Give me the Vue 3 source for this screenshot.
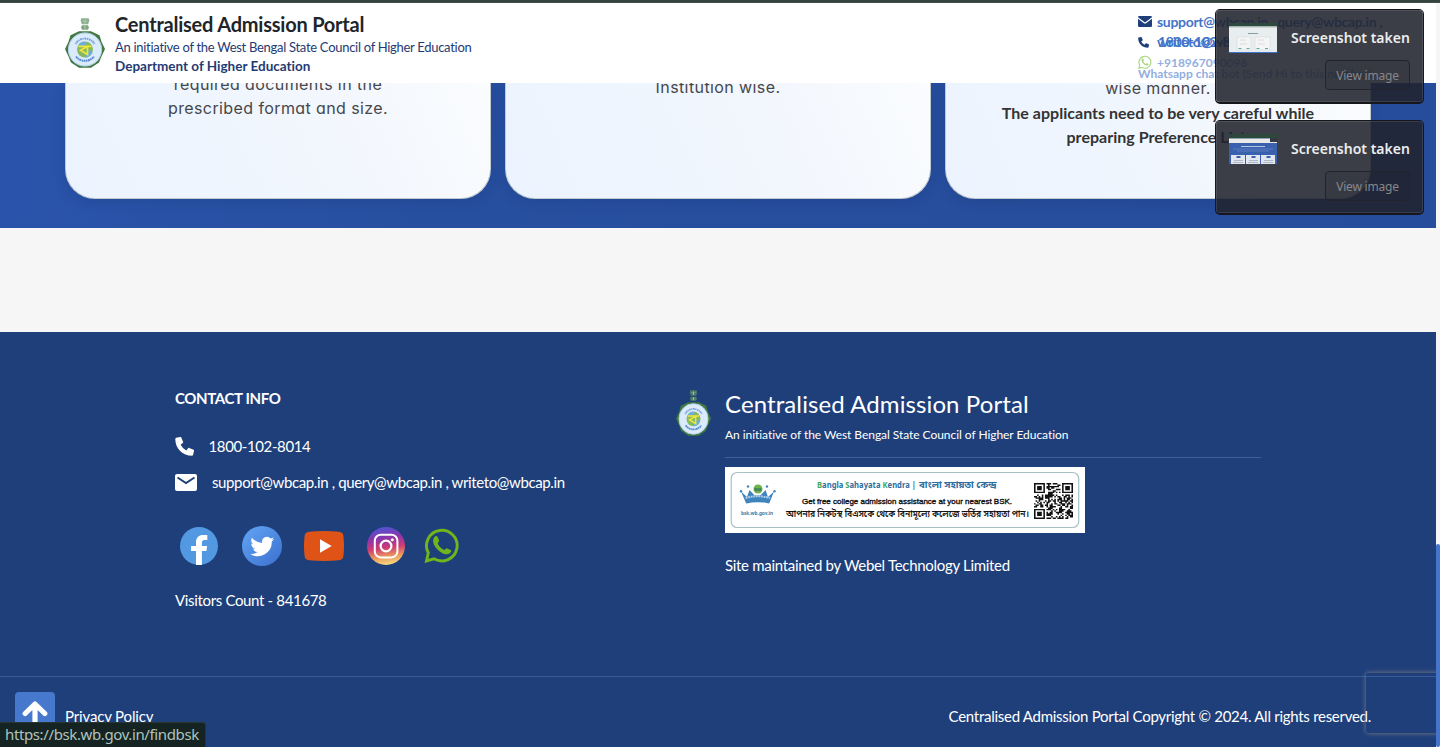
<script setup>
const size = 25
const inFinder = (x, y) => {
  const corners = [[0, 0], [size - 7, 0], [0, size - 7]]
  for (const [cx, cy] of corners) {
    const dx = x - cx
    const dy = y - cy
    if (dx >= -1 && dx <= 7 && dy >= -1 && dy <= 7) {
      if (dx < 0 || dy < 0 || dx > 6 || dy > 6) return 0
      const edge = dx === 0 || dy === 0 || dx === 6 || dy === 6
      const core = dx > 1 && dx < 5 && dy > 1 && dy < 5
      return edge || core ? 1 : 0
    }
  }
  return -1
}
let seed = 77
const rand = () => {
  seed = (seed * 1103515245 + 12345) % 2147483648
  return seed / 2147483648
}
let qrPath = ''
for (let y = 0; y < size; y++) {
  for (let x = 0; x < size; x++) {
    const f = inFinder(x, y)
    const r = rand()
    if (f === 1 || (f === -1 && r > 0.47)) qrPath += `M${x} ${y}h1v1h-1z`
  }
}

const notes = [{ id: 'light' }, { id: 'blue' }]
</script>

<template>
  <div class="screen">
    <svg class="defs" width="0" height="0">
      <defs>
        <symbol id="emblem" viewBox="0 0 40 50">
          <g fill="#5c8f62">
            <path d="M16.300.3h7.400l.6 2.300-1.200 3.600h-6.200l-1.200-3.600z" opacity=".7" />
            <path d="M17 7.300h6l1 2.200-1.200 2.300h-5.600L16 9.500z" opacity=".8" />
          </g>
          <path d="M20 1.500v4M17.800 3h1M21.200 3h1M20 8v3" stroke="#cfe0d0" stroke-width=".7" />
          <path d="M14 13.200h12l8.500 4 2 6.500L40 31l-3.500 7.500-2.500 6-8 5.300H14l-8-5.300-2.500-6L0 31l3.500-7.300 2-6.500z" fill="#41793f" />
          <circle cx="20" cy="31.500" r="16.600" fill="#dcebfc" stroke="#b4d2f2" stroke-width="1" />
          <path d="M10.500 26a11 11 0 0 1 19 0" fill="none" stroke="#5c8ed2" stroke-width="2" stroke-dasharray="1.300 .6 2 .5" opacity=".75" />
          <path d="M11 38.500a11.500 11.500 0 0 0 18 0" fill="none" stroke="#3b77cc" stroke-width="2" stroke-dasharray="2 .5 1.400 .5" opacity=".85" />
          <circle cx="20" cy="31.500" r="8" fill="#86b862" />
          <path d="M13 27.500a8 8 0 0 1 6-4l3 1.500-4 3zM20 39.500a8 8 0 0 0 7.500-5.500l-3-2-4 4z" fill="#6aaee0" />
          <path d="M13.500 28.300h13M22.500 28.500v8l-7-4.200z" fill="none" stroke="#eee63a" stroke-width="1.700" />
        </symbol>
        <symbol id="whatsapp" viewBox="0 0 36 36">
          <path d="M2.500 34l1.800-8.200A15.300 15.300 0 1 1 10 31.800z" fill="none" stroke="currentColor" stroke-width="2.900" stroke-linejoin="miter" />
          <path d="M10.200 10.300c1.200-1.700 2.800-1.800 3.400-.4l1.500 3.500c.4 1-1.500 2-1.300 3 .9 2.700 3.500 5.300 6.400 6.500 1 .2 2-2 3-1.500l3.500 1.700c1.200.8.400 2.400-1.200 3.500-2.500 1.500-6 .5-9.700-2.200-3.400-2.500-5.700-5.600-6.500-8.700-.5-2 0-3.900.9-5.400z" fill="currentColor" />
        </symbol>
        <symbol id="phone" viewBox="0 0 20 20">
          <path d="M1.200.9 5.500 0c.5-.1.900.1 1.100.6l1.900 4.500c.2.4.1.9-.3 1.200L5.900 8.200a14 14 0 0 0 6 6l1.900-2.400c.3-.4.800-.5 1.200-.3l4.500 1.900c.4.200.6.600.5 1.100l-.9 4.300c-.1.500-.5.900-1 .9C8 19.700.3 12.200.3 2c0-.5.400-1 .9-1.100z" fill="currentColor" />
        </symbol>
      </defs>
    </svg>

    <div class="page">
      <div class="topline"></div>
      <header class="header">
        <svg class="logo"><use href="#emblem" /></svg>
        <div class="brand">
          <div class="brand-title"><span>Centralised Admission Portal</span></div>
          <div class="brand-sub"><span>An initiative of the West Bengal State Council of Higher Education</span></div>
          <div class="brand-dept"><span>Department of Higher Education</span></div>
        </div>
        <div class="quick">
          <div class="quick-row">
            <svg class="q-mail" viewBox="0 0 14 11"><path d="M1.200 0h11.600Q14 0 14 1.300L7.700 6q-.7.500-1.400 0L0 1.300Q0 0 1.200 0z" /><path d="M0 2.800l5.600 4.100q1.400 1 2.800 0L14 2.800v7q0 1.200-1.200 1.200H1.200Q0 11 0 9.800z" /></svg>
            <span class="mails">support@wbcap.in , query@wbcap.in ,<br />writeto@wbcap.in</span>
          </div>
          <div class="quick-row">
            <svg class="q-phone"><use href="#phone" /></svg>
            <span>1800-102-8014</span>
          </div>
          <div class="quick-row faded">
            <svg class="q-wa"><use href="#whatsapp" /></svg>
            <span class="wa-number">+918967090096</span>
          </div>
          <div class="wa-note">Whatsapp chat bot (Send Hi to this number)</div>
        </div>
      </header>

      <section class="steps">
        <article class="card c1"><p>required documents in the<br />prescribed format and size.</p></article>
        <article class="card c2"><p>Institution wise.</p></article>
        <article class="card c3"><p>wise manner.<br /><b>The applicants need to be very careful while<br />preparing Preference List.</b></p></article>
      </section>

      <div class="gap"></div>

      <footer class="footer">
        <div class="footer-main">
          <div class="contact">
            <h4>CONTACT INFO</h4>
            <div class="line tel"><svg><use href="#phone" /></svg><span>1800-102-8014</span></div>
            <div class="line mail">
              <svg viewBox="0 0 22 17"><rect width="22" height="17" rx="2" fill="#fff" /><path d="M2.500 3.500 11 9l8.500-5.500" fill="none" stroke="#1f3f7b" stroke-width="2" /></svg>
              <span>support@wbcap.in , query@wbcap.in , writeto@wbcap.in</span>
            </div>
            <div class="social">
              <svg width="38" height="38" viewBox="0 0 38 38"><circle cx="19" cy="19" r="19" fill="#5299e2" /><path d="M16 38V24h-5v-5h5v-3.500c0-5 2.800-7.600 7.300-7.600h4v5h-2.500c-2.200 0-2.900 1.200-2.900 2.700V19h5.200l-.7 5h-4.500v14z" fill="#fff" /></svg>
              <svg width="40" height="40" viewBox="0 0 40 40">
                <defs><linearGradient id="tw" x1="0" y1="0" x2="1" y2="1"><stop offset="0" stop-color="#63a5f4" /><stop offset="1" stop-color="#3b70cf" /></linearGradient></defs>
                <circle cx="20" cy="20" r="20" fill="url(#tw)" />
                <path transform="translate(8.300 8.500)" d="M24 4.600a10 10 0 0 1-2.800.8 5 5 0 0 0 2.200-2.700c-1 .6-2 1-3.100 1.200a4.900 4.900 0 0 0-8.400 4.500A14 14 0 0 1 1.700 3.200a4.900 4.900 0 0 0 1.500 6.500 5 5 0 0 1-2.200-.6 4.900 4.900 0 0 0 4 4.900 5 5 0 0 1-2.300.1 4.900 4.900 0 0 0 4.600 3.400A10 10 0 0 1 0 19.500a14 14 0 0 0 21.500-12.400c1-.7 1.800-1.500 2.500-2.500z" fill="#fff" />
              </svg>
              <svg width="40" height="30" viewBox="0 0 40 30"><path d="M5 .8Q20-.8 35 .8 39 1.200 39.400 5q1.200 10 0 20-.4 3.800-4.400 4.200-15 1.600-30 0Q1 28.800.6 25-.6 15 .6 5 1 1.200 5 .8z" fill="#df5416" /><path d="M16 8.200v13.600L27.700 15z" fill="#fff" /></svg>
              <svg width="38" height="38" viewBox="0 0 38 38">
                <defs><linearGradient id="ig" x1=".4" y1="0" x2=".55" y2="1"><stop offset="0" stop-color="#4f55d4" /><stop offset=".28" stop-color="#8a35ad" /><stop offset=".55" stop-color="#cf3c74" /><stop offset=".78" stop-color="#ea9a5c" /><stop offset="1" stop-color="#f8dc80" /></linearGradient></defs>
                <circle cx="19" cy="19" r="19" fill="url(#ig)" />
                <rect x="7.800" y="7.800" width="22.600" height="22.600" rx="6" fill="none" stroke="#fff" stroke-width="2" />
                <circle cx="19" cy="19" r="5.400" fill="none" stroke="#fff" stroke-width="2.200" /><circle cx="25.300" cy="12.700" r="1.500" fill="#fff" />
              </svg>
              <svg class="wa-big" width="36" height="36"><use href="#whatsapp" /></svg>
            </div>
            <div class="visitors"><span>Visitors Count - 841678</span></div>
          </div>

          <svg class="footer-logo" viewBox="0 0 40 50" preserveAspectRatio="none"><use href="#emblem" width="40" height="50" /></svg>
          <div class="about">
            <h2><span>Centralised Admission Portal</span></h2>
            <p class="tagline"><span>An initiative of the West Bengal State Council of Higher Education</span></p>
            <div class="banner">
              <svg width="360" height="66" viewBox="0 0 360 66">
                <rect x="6.200" y="5.500" width="347.500" height="55" rx="6" fill="#fff" stroke="#a9bfc7" stroke-width="1.200" />
                <g fill="#3f84bd">
                  <path d="M16 24.500l6 5.500 2.500-7 5 5.200h6l5-5.200 2.500 7 6-5.500-4.800 12q-11.500-2.700-23 0z" />
                  <circle cx="16" cy="24.300" r="1.200" /><circle cx="23" cy="19.500" r="1.200" /><circle cx="42" cy="19.500" r="1.200" /><circle cx="49.500" cy="24.300" r="1.200" />
                </g>
                <path d="M20.500 31q12-3.500 24.500 0" fill="none" stroke="#d9ecf8" stroke-width="2" stroke-dasharray="2 .6" opacity=".7" />
                <circle cx="33" cy="22" r="4.500" fill="#6db24a" />
                <text class="bn" x="29.300" y="23.500" font-size="4" font-weight="700" fill="#2f6b68" textLength="7.400" lengthAdjust="spacingAndGlyphs">BSK</text>
                <text class="bn" x="16" y="48" font-size="5.200" font-weight="700" fill="#3d7dab" textLength="32" lengthAdjust="spacingAndGlyphs">bsk.wb.gov.in</text>
                <text class="bn" x="92" y="20.500" font-size="8.600" font-weight="700" fill="#2c6e9f" textLength="99" lengthAdjust="spacingAndGlyphs"><tspan fill="#43a857">B</tspan>angla <tspan fill="#43a857">S</tspan>ahayata <tspan fill="#43a857">K</tspan>endra |</text>
                <text class="bn" x="194" y="20.500" font-size="9" font-weight="700" fill="#2c6e9f" textLength="77.500" lengthAdjust="spacingAndGlyphs">বাংলা সহায়তা কেন্দ্র</text>
                <text class="arial" x="77" y="36.700" font-size="7.800" fill="#111" stroke="#111" stroke-width=".35" textLength="210" lengthAdjust="spacingAndGlyphs">Get free college admission assistance at your nearest BSK.</text>
                <text class="bn" x="61" y="50" font-size="9" font-weight="600" fill="#111" textLength="243" lengthAdjust="spacingAndGlyphs">আপনার নিকটস্থ বিএসকে থেকে বিনামূল্যে কলেজে ভর্তির সহায়তা পান।</text>
                <path :d="qrPath" transform="translate(309 16) scale(1.560 1.440)" fill="#111" />
              </svg>
            </div>
            <p class="maintained"><span>Site maintained by Webel Technology Limited</span></p>
          </div>
        </div>
        <div class="legal">
          <span class="privacy">Privacy Policy</span>
          <span class="copyright">Centralised Admission Portal Copyright © 2024. All rights reserved.</span>
        </div>
      </footer>
    </div>

    <div class="scrollbar"><div class="thumb"></div></div>
    <div class="captcha"></div>
    <div class="to-top"><svg width="26" height="30" viewBox="0 0 26 30"><path d="M3.200 14.500 13 5l9.800 9.500M13 6v24" fill="none" stroke="#fff" stroke-width="5.200" stroke-linecap="round" stroke-linejoin="round" /></svg></div>
    <div class="status"><span>https://bsk.wb.gov.in/findbsk</span></div>

    <div class="notes">
      <div v-for="n in notes" :key="n.id" class="note">
        <div class="note-head">
          <svg width="48" height="30" viewBox="0 0 48 30">
            <template v-if="n.id === 'light'">
              <rect width="48" height="30" fill="#f2f7f8" /><rect width="48" height="3.500" fill="#2c4a3c" /><rect y="3.500" width="48" height="1.500" fill="#d5dcd8" /><rect y="29" width="48" height="1" fill="#3f77d3" />
              <path d="M19 10.500h10" stroke="#8da2a8" stroke-width="1" /><path d="M8 14h14v13H8zM26 14h15v13H26z" fill="#fff" stroke="#e2e6e6" stroke-width=".7" />
              <path d="M11 17h6M29 17h6M11 21h7M29 21h7" stroke="#e0e0e0" stroke-width=".8" /><path d="M9.500 25.500h3M17.500 25.500h3M27.500 25.500h3M36 25.500h3" stroke="#59aeb6" stroke-width="1" />
            </template>
            <template v-else>
              <rect width="48" height="30" fill="#3a63b4" /><rect width="48" height="4.500" fill="#2c4a3c" /><rect y="4.500" width="48" height="4.500" fill="#f4f4f4" /><rect x="41" y="4" width="7" height="4" fill="#333842" />
              <path d="M12 12.500h24" stroke="#bdd0f2" stroke-width="1" /><path d="M4 15h40M8 17h32" stroke="#6c8dcc" stroke-width=".7" />
              <path d="M2 21h14v9H2zM17 21h14v9H17zM32 21h14v9H32z" fill="#eaf0fa" /><path d="M7.500 23h4M22.500 23h4M37.500 23h4" stroke="#3863b4" stroke-width="2" /><path d="M5 26.500h9M20 26.500h9M35 26.500h9M4 28.500h10M19 28.500h10M34 28.500h10" stroke="#9fa9b8" stroke-width=".7" />
            </template>
          </svg>
          <span class="note-title">Screenshot taken</span>
        </div>
        <div class="note-btn"><span>View image</span></div>
      </div>
    </div>
  </div>
</template>

<style>
body { margin: 0; }
</style>

<style scoped>
* { box-sizing: border-box; margin: 0; }
span { white-space: nowrap; }
svg { display: block; flex: none; }
.screen { position: relative; width: 1440px; height: 747px; overflow: hidden; background: #f6f6f6; font-family: Lato, "Noto Sans", sans-serif; font-variant-ligatures: none; }
.defs { position: absolute; }
.page { width: 1436px; display: flex; flex-direction: column; }
.topline { width: 1440px; height: 3px; background: #34433b; border-bottom: 1px solid #435049; }
.header { height: 80px; background: #fff; padding: 15px 0 0 65px; display: flex; }
.logo { width: 40px; height: 50px; }
.brand { margin: -7px 0 0 10px; }
.brand-title { height: 26px; line-height: 26px; font-size: 20px; font-weight: 700; letter-spacing: -.22px; color: #212529; }
.brand-sub { height: 20px; line-height: 20px; font-size: 13px; letter-spacing: -.29px; color: #1f3b73; }
.brand-dept { height: 19px; line-height: 19px; font-size: 13.500px; font-weight: 700; color: #1f3b73; }
.quick { margin: -6px 0 0 auto; width: 298px; font-size: 14px; font-weight: 700; color: #4474c9; letter-spacing: -.31px; }
.quick-row { height: 20px; line-height: 20px; display: flex; align-items: center; }
.q-mail { width: 14px; height: 11px; fill: #1f3f7b; margin-right: 5px; margin-top: -1px; }
.mails { height: 20px; }
.q-phone { width: 11px; height: 11px; margin-right: 9px; color: #1f3f7b; }
.q-wa { width: 14px; height: 14px; color: #a9d67f; margin-right: 5px; margin-top: -2px; }
.wa-number { font-size: 12px; letter-spacing: 0; color: #93aee0; }
.wa-note { font-size: 12px; line-height: 12px; letter-spacing: 0; margin-top: -6px; height: 12px; color: #93aee0; white-space: nowrap; }
.quick-row.faded { height: 22px; }
.steps { height: 145px; overflow: hidden; background: linear-gradient(100deg, #2a54ab 0%, #274f9f 35%, #264d9b 100%); padding: 0 65px; display: flex; justify-content: space-between; }
.card { width: 426px; height: 116px; border: 1px solid #c3c9d0; border-top: 0; border-radius: 0 0 30px 30px; background: linear-gradient(65deg, #ebf3fe 0%, #f0f6fe 45%, #f4f7fd 70%, #fafcfe 100%); box-shadow: 0 3px 12px rgba(20, 45, 100, .22); text-align: center; font-family: Inter, "Open Sans", sans-serif; font-feature-settings: "cv11"; font-size: 16px; line-height: 24px; color: #45474b; }
.card p { white-space: nowrap; letter-spacing: .4px; }
.c1 p { margin-top: -11px; }
.c2 p { margin-top: -8px; }
.c3 p { margin-top: -7px; line-height: 24.500px; }
.card b { font-family: Lato, sans-serif; color: #333; letter-spacing: .02px; }
.gap { height: 104px; background: #f6f6f6; }
.footer { height: 415px; background: #1f3f7b; color: #fff; }
.footer-main { height: 345px; border-bottom: 1px solid #365b98; display: flex; padding: 55px 0 0 175px; }
.contact { width: 501px; font-size: 15px; letter-spacing: -.38px; }
.contact h4 { font-size: 15px; line-height: 22px; font-weight: 700; margin-bottom: 26px; }
.line { display: flex; align-items: center; height: 22px; margin-bottom: 14px; }
.tel svg { width: 19px; height: 19px; margin-right: 14.500px; }
.mail svg { width: 22px; height: 17px; margin-right: 15px; }
.social { display: flex; align-items: center; height: 40px; margin: 33px 0 0 5px; }
.social svg:nth-child(2) { margin-left: 24px; }
.social svg:nth-child(3) { margin-left: 22px; }
.social svg:nth-child(4) { margin-left: 23px; }
.wa-big { margin: -3px 0 0 19px; color: #6fb51c; }
.visitors { margin-top: 23px; line-height: 22px; letter-spacing: -.34px; }
.footer-logo { width: 35px; height: 46px; margin: 3px 14px 0 0; }
.about { width: 536px; }
.about h2 { font-size: 24px; line-height: 34px; font-weight: 400; letter-spacing: .1px; }
.tagline { font-size: 12px; line-height: 18px; letter-spacing: -.05px; margin-top: 5px; padding-bottom: 13px; border-bottom: 1px solid #3f5f98; }
.banner { margin-top: 9px; width: 360px; height: 66px; background: #fff; }
.bn { font-family: "Noto Sans", "Noto Sans Bengali", sans-serif; }
.arial { font-family: "Liberation Sans", sans-serif; }
.maintained { margin-top: 21px; font-size: 15px; line-height: 22px; letter-spacing: -.3px; }
.legal { display: flex; justify-content: space-between; padding: 28px 65px 0; font-size: 15px; line-height: 22px; }
.privacy { letter-spacing: -.15px; }
.copyright { letter-spacing: -.275px; }
.scrollbar { position: absolute; right: 0; top: 3px; width: 4px; bottom: 0; background: #f6f6f6; display: flex; align-items: flex-end; }
.thumb { width: 4px; height: 203px; background: #4574cc; border-radius: 2px; }
.captcha { position: absolute; left: 1366px; top: 673px; width: 80px; height: 60px; border-radius: 2px; box-shadow: 0 0 5px #808080; clip-path: inset(-10px 10px -10px -10px); }
.to-top { position: absolute; left: 15px; top: 692px; width: 40px; height: 40px; background: #4678cd; border-radius: 4px; display: flex; justify-content: center; padding-top: 7px; }
.status { position: absolute; left: 0; bottom: 0; width: 206px; height: 25px; padding-left: 5px; background: #152422; border: 1px solid #26352f; border-left: 0; border-bottom: 0; border-radius: 0 4px 0 0; color: #b0c3bf; font: 15px/23px "Noto Sans", sans-serif; letter-spacing: -.38px; }
.notes { position: absolute; left: 1215px; top: 9px; display: flex; flex-direction: column; gap: 16px; font-family: "Noto Sans", sans-serif; }
.note { width: 209px; height: 95px; border: 1px solid #15171d; border-bottom-width: 2px; border-radius: 5px; background: rgba(33, 35, 45, .88); box-shadow: inset 0 0 0 1px rgba(255, 255, 255, .1); padding: 13px 13px 0; display: flex; flex-direction: column; align-items: flex-end; background-clip: padding-box; }
.note-head { align-self: stretch; height: 30px; display: flex; align-items: center; }
.note-head svg { opacity: .95; }
.note-title { margin: -2px 0 0 14px; font-size: 14px; font-weight: 600; color: #eceded; }
.note-btn { margin-top: 7px; width: 85px; height: 30px; border: 1px solid #22242b; border-radius: 4px; font-size: 12px; line-height: 29px; letter-spacing: -.2px; text-align: center; color: #85878c; background: rgba(30, 30, 40, .12); }
</style>
